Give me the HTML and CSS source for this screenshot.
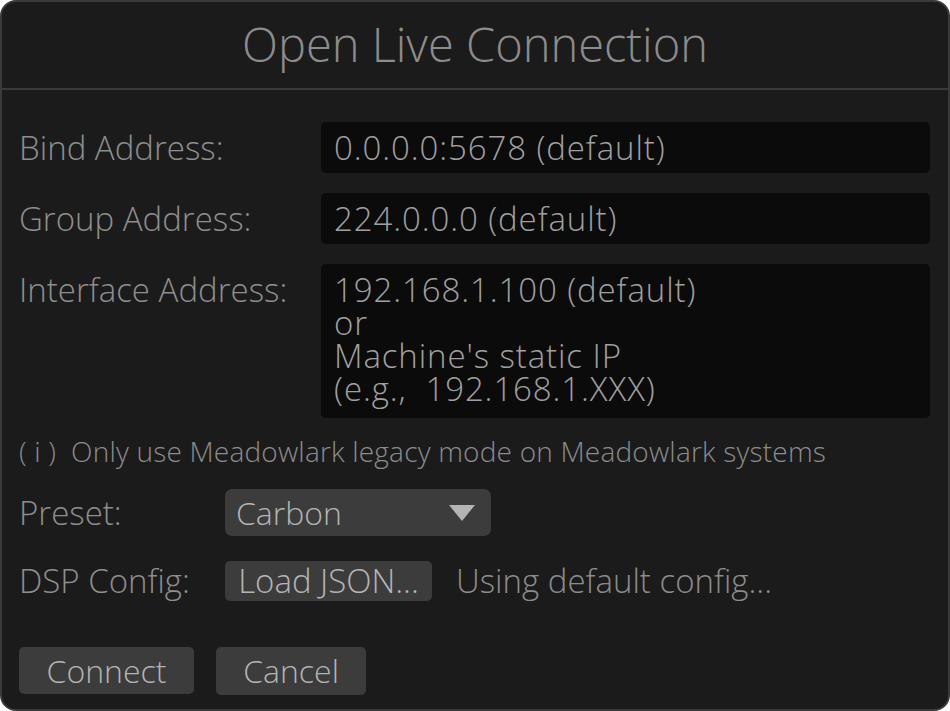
FILE: index.html
```html
<!DOCTYPE html>
<html lang="en">
<head>
    <meta charset="UTF-8">
    <meta name="viewport" content="width=device-width, initial-scale=1.0">
    <title>Open Live Connection</title>
    <link rel="stylesheet" href="styles.css">
</head>
<body>
    <div class="dialog">
        <div class="header">
            <h1 class="title">Open Live Connection</h1>
        </div>
        <div class="content">
            <div class="row">
                <label class="label">Bind Address:</label>
                <div class="field">0.0.0.0:5678 (default)</div>
            </div>
            <div class="row">
                <label class="label">Group Address:</label>
                <div class="field">224.0.0.0 (default)</div>
            </div>
            <div class="row last">
                <label class="label">Interface Address:</label>
                <div class="field area">
                    <div class="line">192.168.1.100 (default)</div>
                    <div class="line">or</div>
                    <div class="line">Machine's static IP</div>
                    <div class="line">(e.g.,&nbsp; 192.168.1.XXX)</div>
                </div>
            </div>
            <p class="note">( i )&nbsp; Only use Meadowlark legacy mode on Meadowlark systems</p>
            <div class="row small preset">
                <label class="label short">Preset:</label>
                <div class="select">
                    <span>Carbon</span>
                    <svg class="arrow" width="26" height="16" viewBox="0 0 26 16"><polygon points="0,0 26,0 13,16" fill="#b4b4b4"/></svg>
                </div>
            </div>
            <div class="row small dsp">
                <label class="label short">DSP Config:</label>
                <button class="btn load">Load JSON...</button>
                <span class="status">Using default config...</span>
            </div>
            <div class="actions">
                <button class="btn connect">Connect</button>
                <button class="btn cancel">Cancel</button>
            </div>
        </div>
    </div>
</body>
</html>
```

FILE: styles.css
```css
body{
    margin:0px;
    padding:0px;
    background-color:#ffffff;
    font-family: "Open Sans", "Noto Sans", sans-serif;
}
.dialog{
    box-sizing: border-box;
    width:950px;
    height:711px;
    border:2px solid #3a3a3a;
    border-radius: 16px;
    background-color:#1b1b1b;
    overflow: hidden;
}
.header{
    height:86px;
    border-bottom:2px solid #3a3a3a;
    display: flex;
    align-items: center;
    justify-content: center;
}
.title{
    margin:0;
    font-weight: 300;
    font-size: 47px;
    color:#8c8c8c;
    padding-bottom: 2px;
}
.content{
    padding: 32px 18px 0 17px;
}
.row{
    display: flex;
    align-items: flex-start;
    margin-bottom: 20px;
}
.row.last{
    margin-bottom: 0;
}
.label{
    width:302px;
    flex-shrink: 0;
    font-size: 33px;
    font-weight: 300;
    color:#8e8e8e;
    line-height: 51px;
    white-space: nowrap;
}
.field{
    flex:1;
    box-sizing: border-box;
    height:51px;
    line-height: 51px;
    padding-left:13px;
    background-color:#0b0b0b;
    border-radius: 5px;
    font-size: 33px;
    font-weight: 300;
    letter-spacing: 0.9px;
    color:#a0a0a0;
}
.field.area{
    height:154px;
    padding-top: 9px;
}
.field.area .line{
    height:33px;
    line-height: 33px;
    white-space: nowrap;
}
.note{
    margin: 16px 0 0 0;
    font-size: 28px;
    font-weight: 300;
    letter-spacing: 0.2px;
    color:#8c8c8c;
    height: 34px;
    line-height: 34px;
    white-space: nowrap;
}
.row.small{
    align-items: center;
    margin-bottom: 0;
}
.row.preset{
    margin-top: 21px;
}
.row.dsp{
    margin-top: 22px;
}
.label.short{
    width:206px;
    line-height: 40px;
}
.select{
    box-sizing: border-box;
    width:266px;
    height:47px;
    background-color:#3c3c3c;
    border-radius: 7px;
    display: flex;
    align-items: center;
    justify-content: space-between;
    padding: 0 16px 0 11px;
    font-size: 32px;
    font-weight: 300;
    color:#b4b4b4;
}
.btn{
    font-family: "Open Sans", "Noto Sans", sans-serif;
    border:none;
    background-color:#3c3c3c;
    color:#b4b4b4;
    font-size: 32px;
    font-weight: 300;
    border-radius: 5px;
    padding: 0;
    cursor: pointer;
}
.load{
    width:207px;
    height:40px;
    line-height: 40px;
    font-size: 33px;
}
.status{
    margin-left: 24px;
    font-size: 33px;
    font-weight: 300;
    color:#8c8c8c;
    white-space: nowrap;
}
.actions{
    display: flex;
    gap:22px;
    margin-top: 44px;
}
.connect{
    width:175px;
    height:47px;
    line-height: 47px;
}
.cancel{
    width:150px;
    height:48px;
    line-height: 48px;
}
```
